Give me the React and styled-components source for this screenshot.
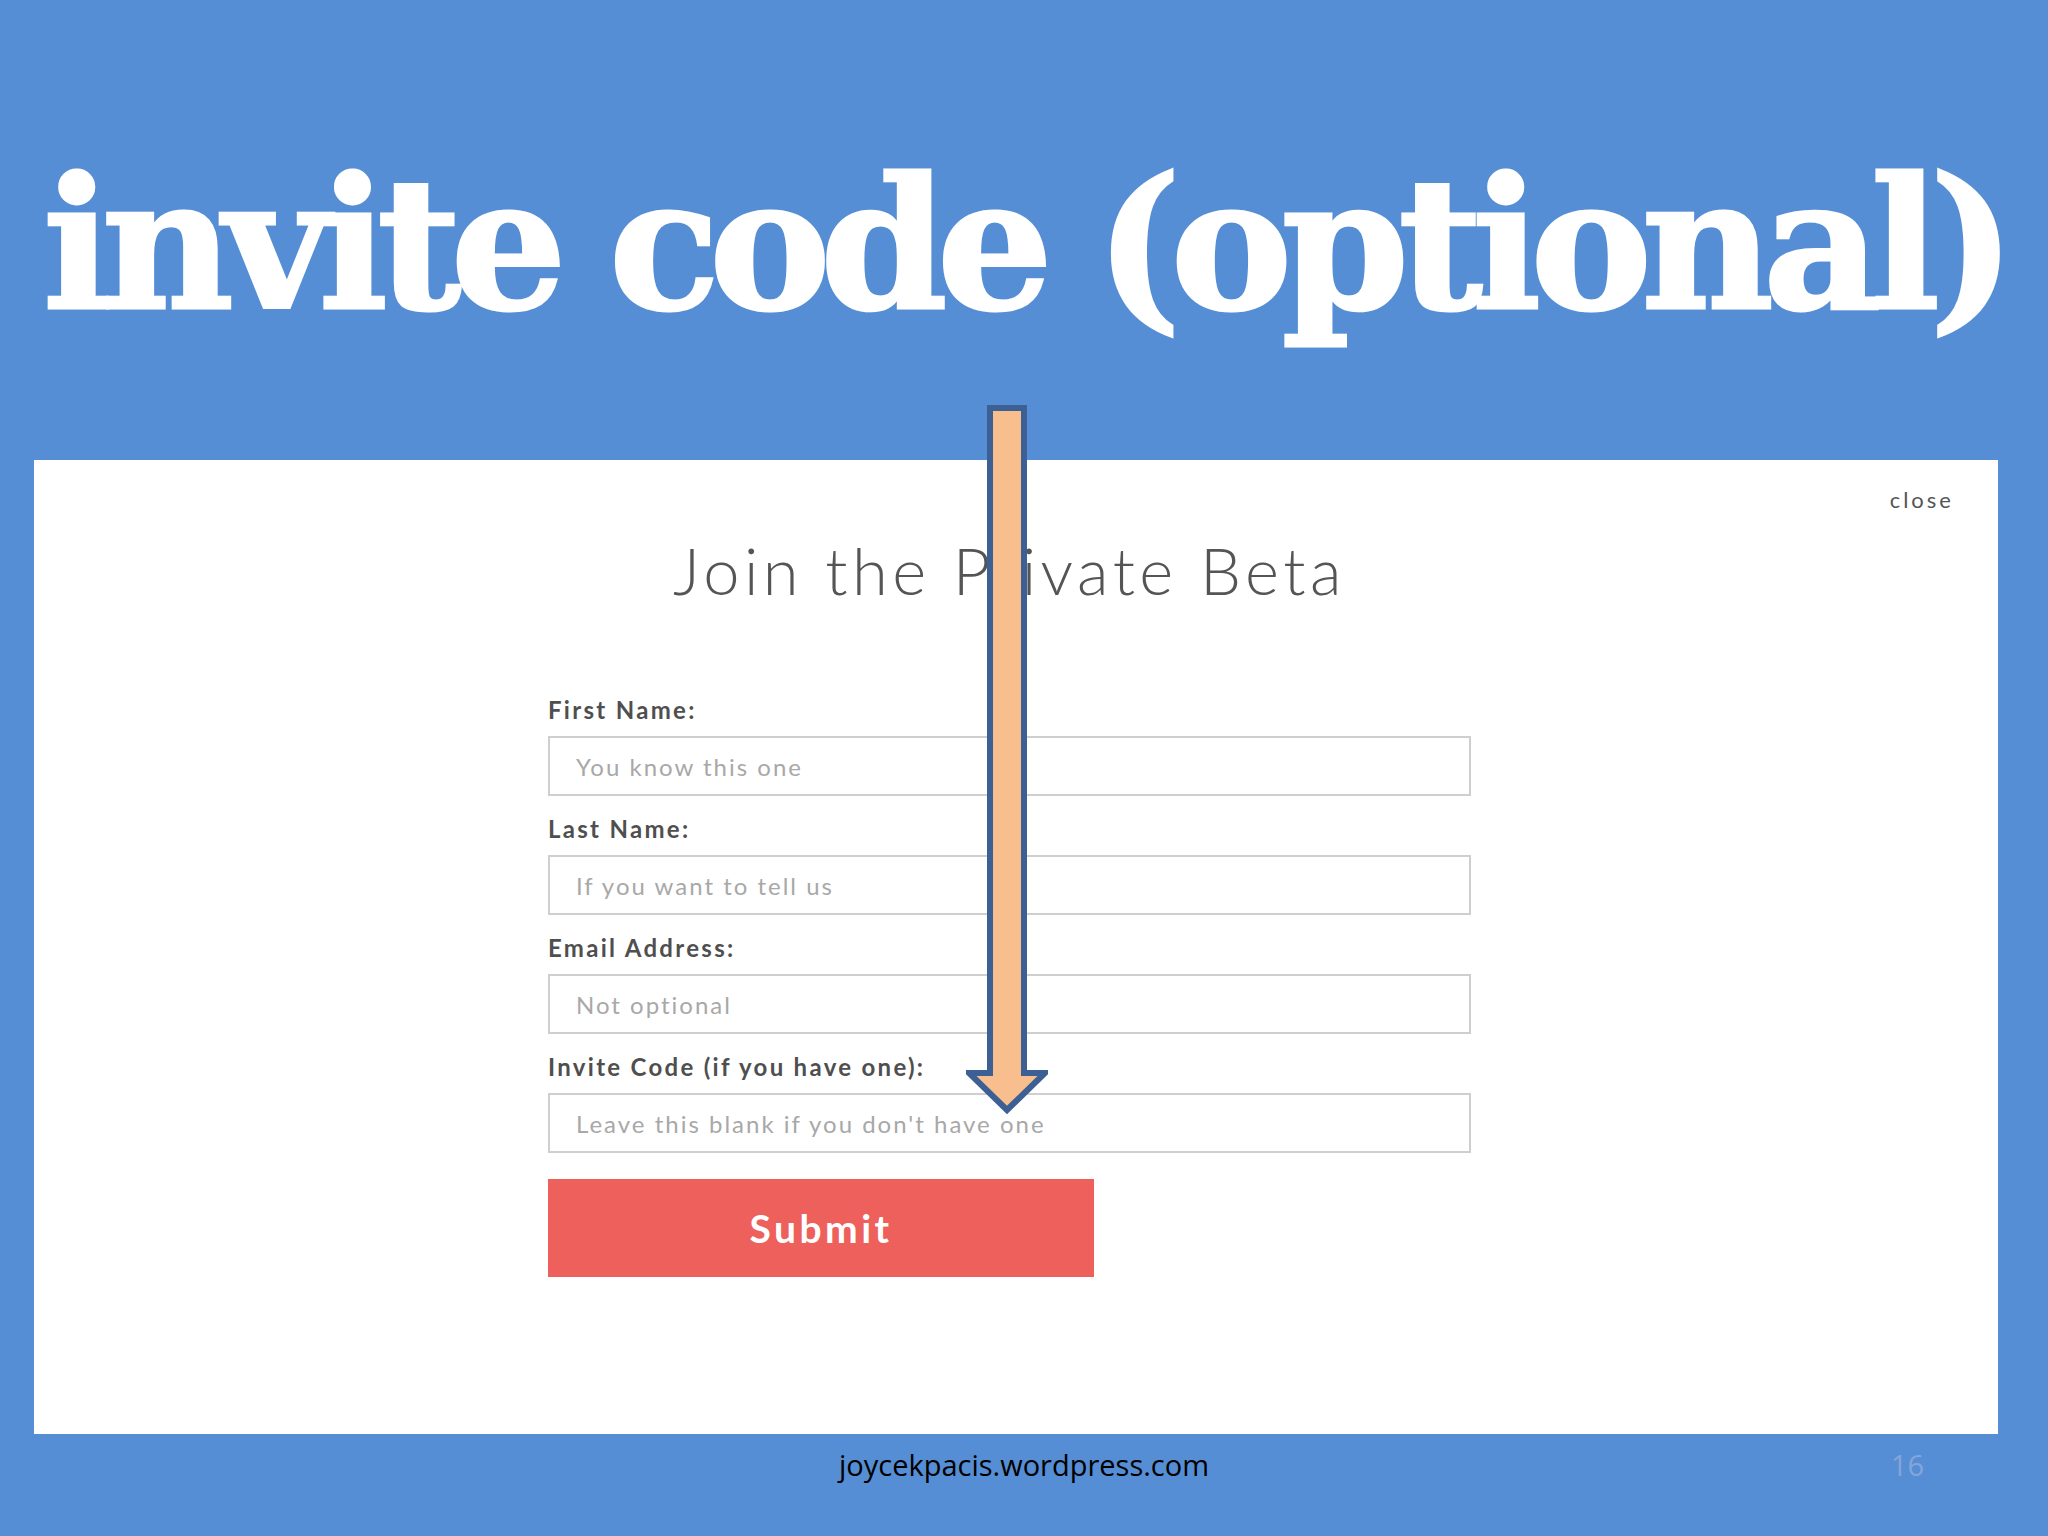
import React from 'react';
import styled, { createGlobalStyle } from 'styled-components';

const GlobalStyle = createGlobalStyle`
  html, body {
    margin: 0;
    padding: 0;
    background: #558ed5;
  }
  * {
    box-sizing: border-box;
  }
`;

const Slide = styled.div`
  position: relative;
  width: 2048px;
  height: 1536px;
  background: #558ed5;
  display: flex;
  flex-direction: column;
  overflow: hidden;
`;

const Header = styled.header`
  height: 460px;
  padding-top: 153px;
  display: flex;
  justify-content: center;
`;

const Title = styled.h1`
  margin: 0;
  font-family: "DejaVu Serif", serif;
  font-weight: 700;
  font-size: 182px;
  line-height: 182px;
  letter-spacing: -10.5px;
  color: #ffffff;
  -webkit-text-stroke: 3px #ffffff;
  white-space: nowrap;
`;

const Panel = styled.section`
  margin: 0 50px 0 34px;
  height: 974px;
  background: #ffffff;
  display: flex;
  flex-direction: column;
  padding: 27px 44px 0 0;
`;

const CloseLink = styled.span`
  align-self: flex-end;
  font-family: Lato, "Open Sans", sans-serif;
  font-size: 22px;
  line-height: 26px;
  letter-spacing: 3px;
  color: #555555;
`;

const Content = styled.div`
  width: 923px;
  margin: 19px 0 0 514px;
  display: flex;
  flex-direction: column;
`;

const Heading = styled.h2`
  margin: 0 0 87px;
  font-family: Lato, sans-serif;
  font-weight: 300;
  font-size: 65px;
  line-height: 76px;
  letter-spacing: 4.5px;
  color: #555555;
  text-align: center;
`;

const Form = styled.form`
  display: flex;
  flex-direction: column;
  gap: 18px;
`;

const Field = styled.div`
  display: flex;
  flex-direction: column;
  gap: 11px;
`;

const Label = styled.label`
  font-family: Lato, sans-serif;
  font-weight: 700;
  font-size: 24px;
  line-height: 30px;
  letter-spacing: 2.3px;
  color: #4f4f4f;
`;

const Input = styled.input`
  height: 60px;
  width: 100%;
  border: 2px solid #cfcfcf;
  padding: 0 26px;
  font-family: Lato, sans-serif;
  font-size: 24px;
  letter-spacing: 2px;
  color: #444;
  background: #fff;
  outline: none;

  &::placeholder {
    color: #a8a8a8;
  }
`;

const SubmitButton = styled.button`
  margin-top: 8px;
  width: 546px;
  height: 98px;
  border: none;
  background: #ee605c;
  color: #ffffff;
  font-family: Lato, sans-serif;
  font-weight: 700;
  font-size: 39px;
  letter-spacing: 3.5px;
  cursor: pointer;
`;

const Footer = styled.footer`
  flex: 1;
  display: grid;
  grid-template-columns: 1fr 1fr 1fr;
  align-items: start;
  padding-top: 13px;
  font-family: "Open Sans", sans-serif;
  font-size: 29px;
  line-height: 36px;
`;

const FooterText = styled.span`
  grid-column: 2;
  justify-self: center;
  color: #000000;
`;

const SlideNumber = styled.span`
  justify-self: end;
  padding-right: 124px;
  color: #86a5d6;
`;

const ArrowWrap = styled.div`
  position: absolute;
  left: 966px;
  top: 405px;
  width: 82px;
  height: 710px;
`;

const fields = [
  { label: 'First Name:', placeholder: 'You know this one' },
  { label: 'Last Name:', placeholder: 'If you want to tell us' },
  { label: 'Email Address:', placeholder: 'Not optional' },
  { label: 'Invite Code (if you have one):', placeholder: "Leave this blank if you don't have one" },
];

const DownArrow = () => (
  <ArrowWrap>
    <svg width="82" height="710" viewBox="0 0 82 710">
      <polygon
        points="24,3 58,3 58,668 79,668 41,705 3,668 24,668"
        fill="#f9be8e"
        stroke="#3c5f94"
        strokeWidth="6"
        strokeLinejoin="miter"
      />
    </svg>
  </ArrowWrap>
);

export default function App() {
  return (
    <Slide>
      <GlobalStyle />
      <Header>
        <Title>invite code (optional)</Title>
      </Header>
      <Panel>
        <CloseLink>close</CloseLink>
        <Content>
          <Heading>Join the Private Beta</Heading>
          <Form onSubmit={(e) => e.preventDefault()}>
            {fields.map((f) => (
              <Field key={f.label}>
                <Label>{f.label}</Label>
                <Input type="text" placeholder={f.placeholder} />
              </Field>
            ))}
            <SubmitButton type="submit">Submit</SubmitButton>
          </Form>
        </Content>
      </Panel>
      <Footer>
        <FooterText>joycekpacis.wordpress.com</FooterText>
        <SlideNumber>16</SlideNumber>
      </Footer>
      <DownArrow />
    </Slide>
  );
}
